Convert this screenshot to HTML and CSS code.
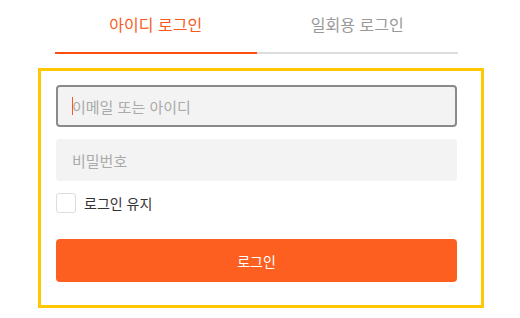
FILE: index.html
```html
<!DOCTYPE html>
<html lang="ko">
<head>
    <meta charset="UTF-8">
    <meta name="viewport" content="width=device-width, initial-scale=1.0">
    <title>로그인</title>
    <link rel="stylesheet" href="styles.css">
</head>
<body>
    <div class="login">
        <div class="tabs">
            <div class="tab active">아이디 로그인</div>
            <div class="tab">일회용 로그인</div>
        </div>

        <form class="panel" onsubmit="return false">
            <div class="field focused">
                <span class="caret"></span>
                <input type="text" class="input" placeholder="이메일 또는 아이디">
            </div>
            <div class="field">
                <input type="password" class="input" placeholder="비밀번호">
            </div>
            <label class="keep">
                <input type="checkbox" class="check">
                <span class="box"></span>
                <span>로그인 유지</span>
            </label>
            <button type="submit" class="submit">로그인</button>
        </form>
    </div>
</body>
</html>
```

FILE: styles.css
```css
body {
    margin: 0;
    font-family: "Noto Sans CJK KR", "Noto Sans", sans-serif;
    background-color: #fff;
}
.login {
    width: 446px;
    margin-left: 38px;
}
.tabs {
    display: flex;
    margin: 0 26px 14px 17px;
}
.tab {
    flex: 1;
    text-align: center;
    font-size: 16px;
    line-height: 24px;
    padding: 12px 0 16px;
    color: #999;
    border-bottom: 2px solid #ddd;
}
.tab.active {
    color: #fa5a1e;
    border-bottom-color: #fa5014;
}
.panel {
    box-sizing: border-box;
    height: 240px;
    border: 3px solid #ffc800;
    padding: 14px 24px 23px 15px;
    display: flex;
    flex-direction: column;
}
.field {
    position: relative;
    height: 42px;
    margin-bottom: 12px;
}
.input {
    box-sizing: border-box;
    width: 100%;
    height: 42px;
    padding: 0 16px;
    border: none;
    border-radius: 4px;
    background-color: #f3f3f3;
    font-family: inherit;
    font-size: 15px;
    color: #333;
    outline: none;
}
.input::placeholder {
    color: #aaa;
}
.focused .input {
    border: 2px solid #8a8a8a;
    padding: 0 14px;
}
.caret {
    position: absolute;
    left: 16px;
    top: 12px;
    width: 1px;
    height: 18px;
    background-color: #fa5a1e;
}
.keep {
    display: flex;
    align-items: center;
    gap: 8px;
    height: 20px;
    font-size: 14px;
    color: #333;
    cursor: pointer;
}
.check {
    display: none;
}
.box {
    box-sizing: border-box;
    width: 20px;
    height: 20px;
    border: 1px solid #ddd;
    border-radius: 3px;
    background-color: #fff;
}
.submit {
    margin-top: 26px;
    height: 43px;
    border: none;
    border-radius: 4px;
    background-color: #fc5f20;
    color: #fff;
    font-family: inherit;
    font-size: 14px;
    cursor: pointer;
}
```
